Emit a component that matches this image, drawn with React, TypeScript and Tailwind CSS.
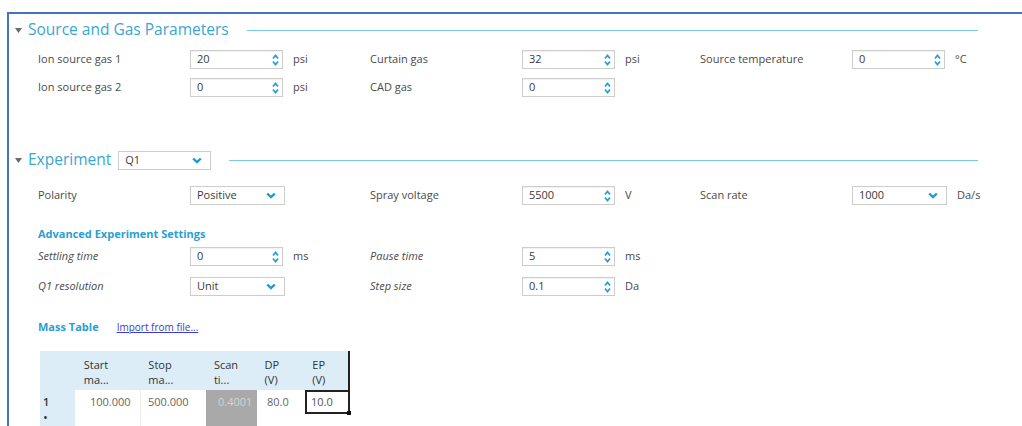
import React from 'react'

const font = { fontFamily: '"Segoe UI", "Open Sans", "Noto Sans", sans-serif' }

function Caret() {
  return (
    <svg width="7" height="5" viewBox="0 0 7 5" className="shrink-0">
      <polygon points="0,0 7,0 3.5,5" fill="#6b6b6b" />
    </svg>
  )
}

function Spinner() {
  return (
    <svg width="7" height="12" viewBox="0 0 7 12" className="shrink-0">
      <path d="M1 4.5 L3.5 1.5 L6 4.5" fill="none" stroke="#2a9fd6" strokeWidth="1.8" />
      <path d="M1 7.5 L3.5 10.5 L6 7.5" fill="none" stroke="#2a9fd6" strokeWidth="1.8" />
    </svg>
  )
}

function Chevron() {
  return (
    <svg width="10" height="7" viewBox="0 0 10 7" className="shrink-0">
      <path d="M1.2 1.5 L5 5.2 L8.8 1.5" fill="none" stroke="#1f9ad6" strokeWidth="2.4" />
    </svg>
  )
}

function NumberBox({ value }: { value: string }) {
  return (
    <div className="flex items-center justify-between w-[93px] h-[19px] border border-[#cdcdcd] bg-white pl-[6px] pr-[3px] shadow-[inset_0_1px_1px_rgba(0,0,0,0.06)]">
      <span className="text-[11px] text-[#3a3a3a]">{value}</span>
      <Spinner />
    </div>
  )
}

function DropBox({ value, width = 'w-[95px]' }: { value: string; width?: string }) {
  return (
    <div className={`flex items-center justify-between ${width} h-[19px] border border-[#cdcdcd] bg-white pl-[6px] pr-[8px]`}>
      <span className="text-[11px] text-[#3a3a3a]">{value}</span>
      <Chevron />
    </div>
  )
}

type Field = {
  label: string
  value: string
  unit?: string
  kind?: 'num' | 'drop'
  italic?: boolean
}

function FieldCell({ f }: { f: Field }) {
  return (
    <div className="flex items-center">
      <span className={`w-[152px] text-[11px] text-[#4a4a4a] ${f.italic ? 'italic' : ''}`}>{f.label}</span>
      {f.kind === 'drop' ? <DropBox value={f.value} /> : <NumberBox value={f.value} />}
      {f.unit && <span className="ml-[10px] text-[11px] text-[#4a4a4a]">{f.unit}</span>}
    </div>
  )
}

function FieldRow({ fields }: { fields: (Field | null)[] }) {
  return (
    <div className="grid grid-cols-[332px_330px_1fr] h-[19px] pl-[29px]">
      {fields.map((f, i) => (f ? <FieldCell key={i} f={f} /> : <div key={i} />))}
    </div>
  )
}

function SectionHeader({ title, children }: { title: string; children?: React.ReactNode }) {
  return (
    <div className="flex items-center h-[20px] pl-[6px] pr-[44px]">
      <Caret />
      <span className="ml-[6px] text-[15.5px] leading-none text-[#3aa6d2]">{title}</span>
      {children}
      <div className="flex-1 h-px bg-[#78c9e3] ml-[18px]" />
    </div>
  )
}

const headerCols = [
  { w: 'w-[35px]', lines: ['', ''] },
  { w: 'w-[65px]', lines: ['Start', 'ma...'] },
  { w: 'w-[66px]', lines: ['Stop', 'ma...'] },
  { w: 'w-[51px]', lines: ['Scan', 'ti...'] },
  { w: 'w-[48px]', lines: ['DP', '(V)'] },
  { w: 'w-[45px]', lines: ['EP', '(V)'] },
]

function MassTable() {
  return (
    <div className="ml-[31px] w-[310px]">
      <div className="flex h-[39px] bg-[#ddedf8] border-r-2 border-[#222]">
        {headerCols.map((c, i) => (
          <div key={i} className={`${c.w} pl-[9px] pt-[6px] text-[11px] leading-[15px] text-[#333]`}>
            <div>{c.lines[0]}</div>
            <div>{c.lines[1]}</div>
          </div>
        ))}
      </div>
      <div className="flex h-[40px]">
        <div className="w-[35px] bg-[#ddedf8] pl-[3px] pt-[4px] text-[11px] leading-[15px] text-[#333]">
          <div className="font-semibold">1</div>
          <div className="mt-[1px] text-[13px] leading-[15px]">•</div>
        </div>
        <div className="w-[65px] pl-[15px] pt-[4px] text-[11px] text-[#666]">100.000</div>
        <div className="w-[66px] pl-[7px] pt-[4px] text-[11px] text-[#666] border-l border-[#ececec]">500.000</div>
        <div className="w-[51px] bg-[#a9a9a9] pl-[12px] pt-[4px] text-[11px] text-[#d4d4d4]">0.4001</div>
        <div className="w-[48px] pl-[10px] pt-[4px] text-[11px] text-[#666]">80.0</div>
        <div className="w-[45px]">
          <div className="relative h-[24px] border-2 border-[#222] pl-[4px] pt-[2px] text-[11px] text-[#555]">
            10.0
            <div className="absolute -right-[3px] -bottom-[3px] w-[4px] h-[4px] bg-[#111]" />
          </div>
        </div>
      </div>
    </div>
  )
}

export default function App() {
  return (
    <div className="w-[1022px] h-[426px] bg-white overflow-hidden pt-[12px] pl-[7px]" style={font}>
      <div className="h-full border-t-2 border-l-2 border-[#4472c4] pt-[6px]">
        <SectionHeader title="Source and Gas Parameters" />
        <div className="mt-[10px] flex flex-col gap-[9px]">
          <FieldRow
            fields={[
              { label: 'Ion source gas 1', value: '20', unit: 'psi' },
              { label: 'Curtain gas', value: '32', unit: 'psi' },
              { label: 'Source temperature', value: '0', unit: '°C' },
            ]}
          />
          <FieldRow
            fields={[
              { label: 'Ion source gas 2', value: '0', unit: 'psi' },
              { label: 'CAD gas', value: '0' },
              null,
            ]}
          />
        </div>

        <div className="mt-[53px]">
          <SectionHeader title="Experiment">
            <div className="ml-[7px]">
              <DropBox value="Q1" width="w-[93px]" />
            </div>
          </SectionHeader>
        </div>

        <div className="mt-[16px]">
          <FieldRow
            fields={[
              { label: 'Polarity', value: 'Positive', kind: 'drop' },
              { label: 'Spray voltage', value: '5500', unit: 'V' },
              { label: 'Scan rate', value: '1000', unit: 'Da/s', kind: 'drop' },
            ]}
          />
        </div>

        <div className="mt-[22px] pl-[29px] h-[14px] text-[11px] leading-[14px] font-bold text-[#2a9fd1]">
          Advanced Experiment Settings
        </div>

        <div className="mt-[6px] flex flex-col gap-[11px]">
          <FieldRow
            fields={[
              { label: 'Settling time', value: '0', unit: 'ms', italic: true },
              { label: 'Pause time', value: '5', unit: 'ms', italic: true },
              null,
            ]}
          />
          <FieldRow
            fields={[
              { label: 'Q1 resolution', value: 'Unit', kind: 'drop', italic: true },
              { label: 'Step size', value: '0.1', unit: 'Da', italic: true },
              null,
            ]}
          />
        </div>

        <div className="mt-[24px] pl-[29px] h-[14px] flex items-center">
          <span className="text-[11px] font-bold text-[#2a9fd1]">Mass Table</span>
          <span className="ml-[18px] text-[10px] text-[#3b3bd0] underline">Import from file...</span>
        </div>

        <div className="mt-[17px]">
          <MassTable />
        </div>
      </div>
    </div>
  )
}
